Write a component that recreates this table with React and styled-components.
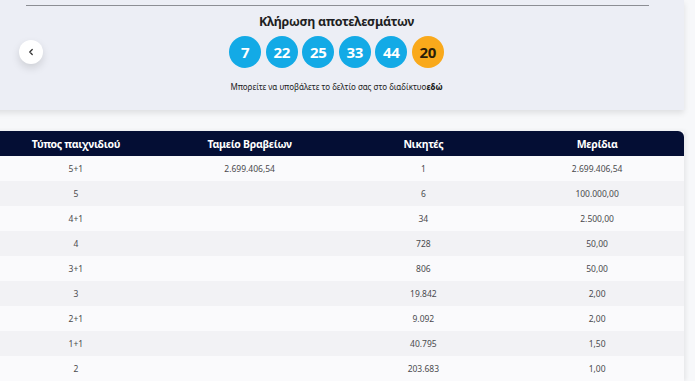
import React from 'react';
import styled, { createGlobalStyle } from 'styled-components';
import { ChevronLeft } from 'lucide-react';

const GlobalStyle = createGlobalStyle`
  body {
    margin: 0;
    background: #f7f8fa;
    font-family: 'Noto Sans', 'DejaVu Sans', sans-serif;
    overflow: hidden;
  }
`;

const Page = styled.div`
  width: 695px;
  margin-left: -11px;
`;

const DrawCard = styled.section`
  background: #eceef5;
  padding: 5px 0 17px;
  box-shadow: 0 3px 6px rgba(0, 0, 0, 0.1);
`;

const Divider = styled.hr`
  margin: 0 35px 0 37px;
  border: 0;
  border-top: 1.5px solid #8c8e94;
`;

const DrawBody = styled.div`
  display: grid;
  grid-template-columns: 1fr auto 1fr;
  padding-top: 8px;
`;

const BackButton = styled.button`
  justify-self: start;
  align-self: start;
  margin: 26px 0 0 30px;
  width: 24px;
  height: 24px;
  border: 0;
  border-radius: 50%;
  background: #fff;
  box-shadow: 0 4px 8px rgba(0, 0, 0, 0.13);
  display: flex;
  align-items: center;
  justify-content: center;
  padding: 0;
  color: #333;
`;

const DrawCenter = styled.div`
  display: flex;
  flex-direction: column;
  align-items: center;
`;

const DrawTitle = styled.h2`
  margin: 0;
  font-size: 12.5px;
  line-height: 16px;
  font-weight: 700;
  letter-spacing: -0.3px;
  color: #1e1e22;
`;

const Balls = styled.div`
  display: flex;
  gap: 4.5px;
  margin-top: 6px;
`;

const Ball = styled.span`
  width: 32px;
  height: 32px;
  border-radius: 50%;
  background: ${p => (p.joker ? '#f9a91b' : '#13aae6')};
  color: ${p => (p.joker ? '#2a1d08' : '#fff')};
  display: flex;
  align-items: center;
  justify-content: center;
  font-size: 15px;
  font-weight: 700;
  letter-spacing: -0.3px;
`;

const Note = styled.p`
  margin: 13px 0 0;
  font-size: 8px;
  line-height: 12px;
  color: #222;
  b {
    font-weight: 800;
  }
`;

const Table = styled.div`
  margin-top: 21px;
  width: 695px;
  box-shadow: 2px 0 4px rgba(0, 0, 0, 0.07);
`;

const HeadRow = styled.div`
  display: grid;
  grid-template-columns: repeat(4, 1fr);
  height: 25px;
  align-items: center;
  background: #040e34;
  border-radius: 6px 6px 0 0;
`;

const HeadCell = styled.div`
  text-align: center;
  color: #fff;
  font-size: 10.5px;
  font-weight: 700;
  letter-spacing: -0.3px;
`;

const Row = styled.div`
  display: grid;
  grid-template-columns: repeat(4, 1fr);
  height: 25px;
  align-items: center;
  background: ${p => (p.alt ? '#f2f2f5' : '#fafafc')};
`;

const Cell = styled.div`
  text-align: center;
  color: #4a4a4e;
  font-size: 8.5px;
`;

const numbers = [7, 22, 25, 33, 44];

const rows = [
  ['5+1', '2.699.406,54', '1', '2.699.406,54'],
  ['5', '', '6', '100.000,00'],
  ['4+1', '', '34', '2.500,00'],
  ['4', '', '728', '50,00'],
  ['3+1', '', '806', '50,00'],
  ['3', '', '19.842', '2,00'],
  ['2+1', '', '9.092', '2,00'],
  ['1+1', '', '40.795', '1,50'],
  ['2', '', '203.683', '1,00'],
];

export default function App() {
  return (
    <>
      <GlobalStyle />
      <Page>
        <DrawCard>
          <Divider />
          <DrawBody>
            <BackButton aria-label="προηγούμενη κλήρωση">
              <ChevronLeft size={10} strokeWidth={3} />
            </BackButton>
            <DrawCenter>
              <DrawTitle>Κλήρωση αποτελεσμάτων</DrawTitle>
              <Balls>
                {numbers.map(n => (
                  <Ball key={n}>{n}</Ball>
                ))}
                <Ball joker>20</Ball>
              </Balls>
              <Note>
                Μπορείτε να υποβάλετε το δελτίο σας στο διαδίκτυο<b>εδώ</b>
              </Note>
            </DrawCenter>
          </DrawBody>
        </DrawCard>

        <Table>
          <HeadRow>
            <HeadCell>Τύπος παιχνιδιού</HeadCell>
            <HeadCell>Ταμείο Βραβείων</HeadCell>
            <HeadCell>Νικητές</HeadCell>
            <HeadCell>Μερίδια</HeadCell>
          </HeadRow>
          {rows.map((r, i) => (
            <Row key={r[0]} alt={i % 2 === 1}>
              {r.map((c, j) => (
                <Cell key={j}>{c}</Cell>
              ))}
            </Row>
          ))}
        </Table>
      </Page>
    </>
  );
}
